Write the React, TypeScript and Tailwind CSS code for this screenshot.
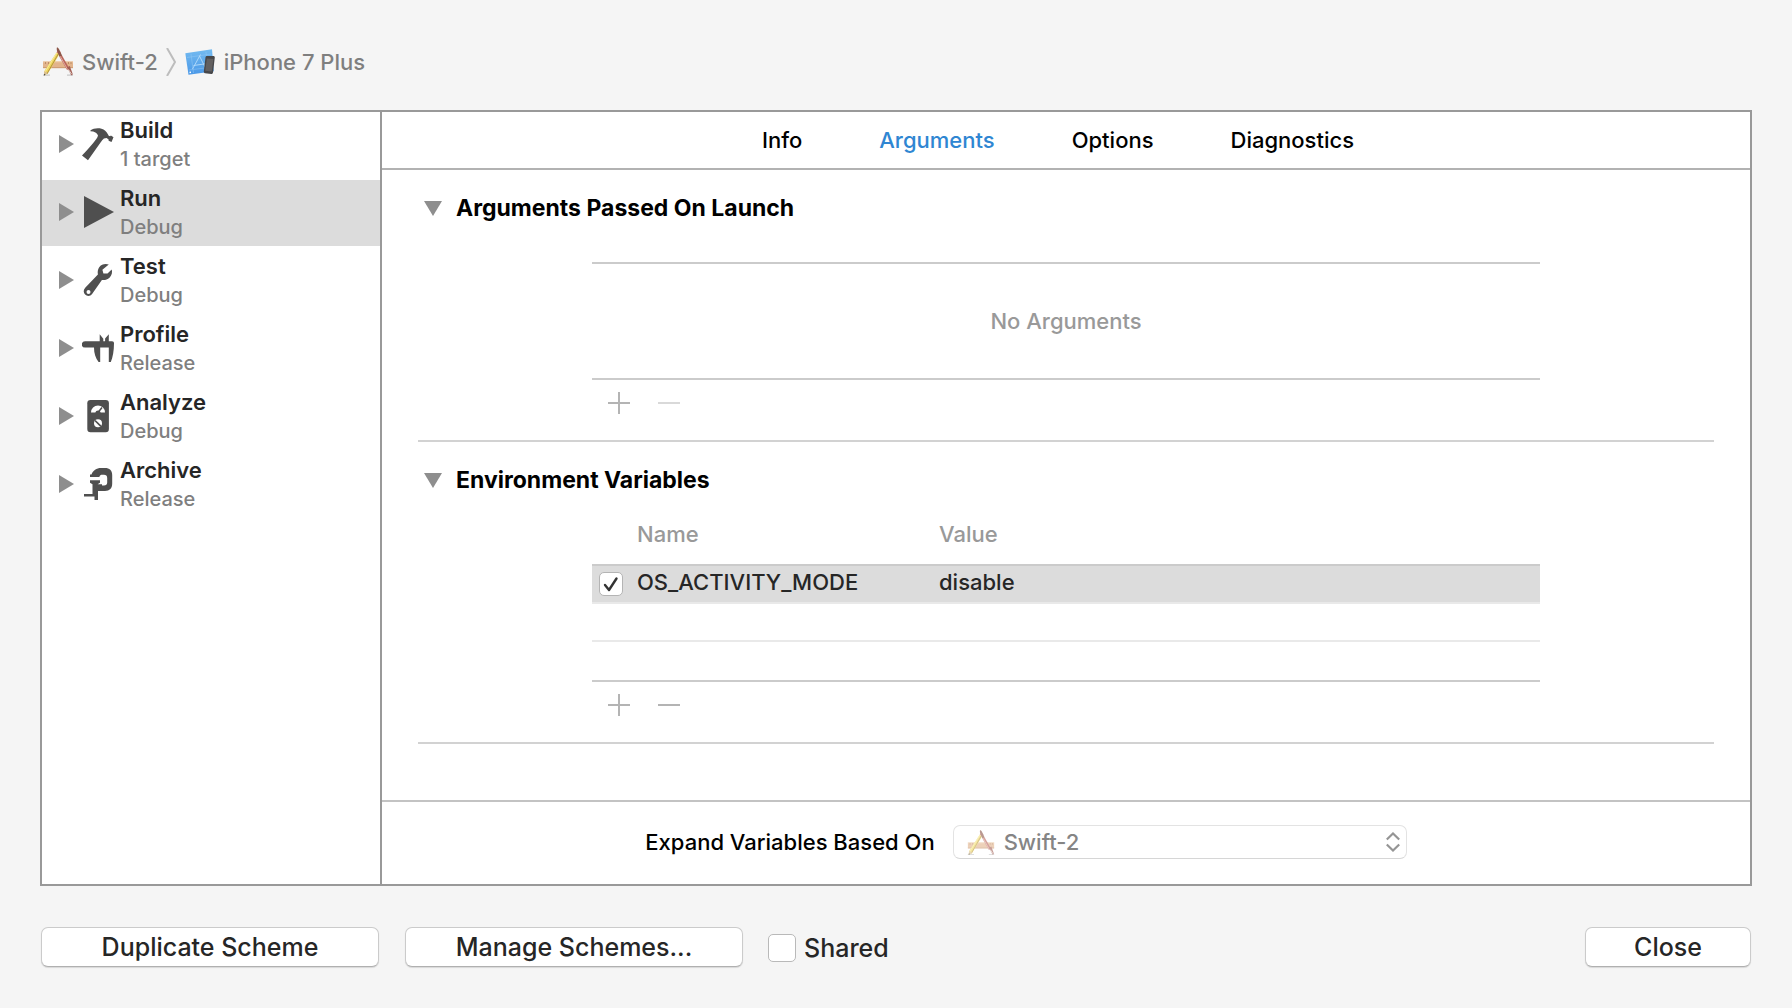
import React, { useState } from "react";

type Action = {
  name: string;
  detail: string;
  icon: React.ReactNode;
};

const HammerIcon = () => (
  <svg viewBox="0 -1 32 32" className="size-8 overflow-visible" fill="#4f4f4f">
    <path d="M8.4 1.4C11-.6 16-1.2 19.5-.2c3 .9 4.8 2.6 6.4 5.4l.8 1.6 1.4.5.8-.8 2.6 1.7-2 4.8-2.9-1.3v-1.3l-2-1.3-2.7.4c-1.4 1.2-2.2 2.3-3 3.6L6 31.2l-6-4.6C5.5 20.6 10.5 15.5 14.3 10c.9-1.3 1.5-2.2 1.7-3.4C15.2 4 12.5 2.3 8.4 2.3z" />
  </svg>
);

const RunIcon = () => (
  <svg viewBox="0 0 32 32" className="size-8" fill="#4f4f4f">
    <path d="M2 0v32l30-16z" />
  </svg>
);

const WrenchIcon = () => (
  <svg viewBox="0 -1 32 32" className="size-8 overflow-visible" fill="#4f4f4f">
    <path
      fillRule="evenodd"
      d="M26.8-.4C23.5-1.7 19.3-.7 17.2 2.3c-1.5 2.2-1.7 4.5-1.3 7.2L3.2 22.7c-2 2.1-1.9 5.1-.1 6.9 2 1.9 5.3 1.7 7-.6l9.8-14c2.9.3 5.5-.3 7.6-2.3 2.3-2.2 3.1-5.6 2.2-8.2l-4.2 4.1-4.1-.2-1-3.6zM6.5 25a2 2 0 1 1 0 4 2 2 0 0 1 0-4z"
    />
  </svg>
);

const CaliperIcon = () => (
  <svg viewBox="0 -1 32 32" className="size-8" fill="#4f4f4f">
    <path d="M3 8.3h14.7V1.3l3.6 4.5v2.5h1.8V5.6l3.7-4.3v7H30c1.4 0 2 .7 2 2C32 18 30.8 24.6 28.8 29h-2V14.6h-8.6V29h-1.6C13.6 25.5 12 20.5 12 14.6H3a3.1 3.1 0 0 1 0-6.3z" />
  </svg>
);

const MeterIcon = () => (
  <svg viewBox="0 -1 32 32" className="size-8 overflow-visible">
    <rect x="5.3" y="-1" width="21.6" height="32.3" rx="3.2" fill="#4f4f4f" />
    <path d="M9 11.5a7 7 0 0 1 14 0h-4.3a2.8 2.8 0 0 0-5.4 0z" fill="#fff" />
    <path d="M16 11.5 20 6.5" stroke="#4f4f4f" strokeWidth="1.5" />
    <circle cx="16" cy="22.3" r="4" fill="#fff" />
    <path d="m13 19.5 6 5.8" stroke="#4f4f4f" strokeWidth="1.7" />
  </svg>
);

const ClampIcon = () => (
  <svg viewBox="0 -1 32 32" className="size-8 overflow-visible" fill="#4f4f4f">
    <path d="M8 5.5h1.5C11 1.5 14.5-1 19-1h4c4.500 0 7.2 2.6 7.2 7v8.5c0 4.7-2.5 7.5-7.2 7.5h-4v-5.5h3c2 0 3.2-1.2 3.2-3V9c0-2-1.2-3.2-3.2-3.2h-1.5c-1.8 0-2.7.6-3.2 2.2H8z" />
    <path d="M8 11.3h10v2.4l-2.4 1.6H20V22h-4v9h-3.5v-3.5H2V25h8.5v-9.7L8 13.7z" />
  </svg>
);

// Pencil and brush crossed over a wooden ruler
const AppIcon = ({ className }: { className?: string }) => (
  <svg viewBox="0 0 32 32" className={className}>
    <path d="M1 29.2h7M25 29.2h6" stroke="#b5b5b5" strokeWidth="1.2" opacity=".7" />
    <rect x="1" y="15.5" width="30" height="6.5" fill="#e2b48c" />
    <path d="M1 15.8h30" stroke="#efcdac" />
    <path d="M1 21.7h30" stroke="#c99870" />
    <path d="M3.5 16v2M6.5 16v2M22.5 16v2M26.5 16v2M29 16v2" stroke="#b5835c" strokeWidth=".8" />
    <path d="m14.5 6.5 3 1.5L5.8 27.4 2 29.5l.4-4.5z" fill="#efd65c" />
    <path d="M16.5 7.6 4.8 28" stroke="#a98a3a" strokeWidth=".9" />
    <path d="M14.7 7 3 26" stroke="#f8eda0" strokeWidth=".9" />
    <path d="m14.5 6.5 1.3-2.2 3 1.7-1.3 2.2z" fill="#dc7a70" />
    <path d="m2.4 25 3.3 2-3.7 2.7z" fill="#d9bd91" />
    <path d="m2.1 27.8 1.4.8L2 29.8z" fill="#444" />
    <path d="M15 1.2c1.3.5 2.1 1.7 2.8 3.5l2.4 5-2.6 1.2-2.3-5.3c-.6-1.6-.8-3-.3-4.4z" fill="#8c5648" />
    <path d="m18.8 10.2 7.5 13.2" stroke="#b9665a" strokeWidth="2.8" />
    <path d="m18.3 10.5 7.3 13" stroke="#e3aaa2" strokeWidth="1" />
    <path d="m25.2 21.3 2.6-1.3 3 8.2-1.5 1.3z" fill="#a35f54" />
    <path d="m26.5 23.6 3 4.5" stroke="#e5d5cf" strokeWidth="1" />
  </svg>
);

const SimulatorIcon = () => (
  <svg viewBox="0 0 32 28" className="h-7 w-8">
    <defs>
      <linearGradient id="sky" x1="0" y1="0" x2="0" y2="1">
        <stop offset="0" stopColor="#74bbf0" />
        <stop offset="1" stopColor="#4a98e8" />
      </linearGradient>
    </defs>
    <path d="M1.3 5.200 28 1.2l1.800 22L4.5 26.800z" fill="url(#sky)" />
    <path d="m3 9.500 24-3.500M5 22l20-2.500M7 6l2.500 19M22 4l2 18" stroke="#93c9f5" strokeWidth=".5" />
    <path d="M16.5 6.500 8.500 21M15.500 8 21 19M9.500 17.500l12-1.700" stroke="#b4dbfa" strokeWidth=".9" fill="none" />
    <path d="m5.500 24.500 1.500-.2" stroke="#fff" strokeWidth="1.500" />
    <path d="M23 8h6.300c1 0 1.600.6 1.500 1.500L29 24.500c-.2 1-.8 1.600-1.700 1.500l-6.300-.8c-.9-.1-1.300-.7-1.200-1.600L21.500 9.300c.2-.9.700-1.300 1.500-1.300z" fill="#47474a" />
    <path d="m22.900 10.500 6.500.5-1.700 12.500-6.500-.7z" fill="#626061" />
  </svg>
);

const Disclosure = ({ open = false }: { open?: boolean }) =>
  open ? (
    <svg viewBox="0 0 18 15" className="h-[15px] w-[18px]" fill="#8e8e8e">
      <path d="M0 0h18L9 15z" />
    </svg>
  ) : (
    <svg viewBox="0 0 15 18" className="h-[18px] w-[15px]" fill="#8e8e8e">
      <path d="M0 0v18l15-9z" />
    </svg>
  );

const actions: Action[] = [
  { name: "Build", detail: "1 target", icon: <HammerIcon /> },
  { name: "Run", detail: "Debug", icon: <RunIcon /> },
  { name: "Test", detail: "Debug", icon: <WrenchIcon /> },
  { name: "Profile", detail: "Release", icon: <CaliperIcon /> },
  { name: "Analyze", detail: "Debug", icon: <MeterIcon /> },
  { name: "Archive", detail: "Release", icon: <ClampIcon /> },
];

const tabs = ["Info", "Arguments", "Options", "Diagnostics"];

const AddRemove = ({ canRemove }: { canRemove: boolean }) => (
  <div className="flex gap-7 pt-3 pb-[26px] pl-4">
    <button type="button" aria-label="Add">
      <svg viewBox="0 0 22 22" className="size-[22px]" stroke="#b4b4b4" strokeWidth="2">
        <path d="M0 11h22M11 0v22" />
      </svg>
    </button>
    <button
      type="button"
      aria-label="Remove"
      disabled={!canRemove}
      className="disabled:opacity-50"
    >
      <svg viewBox="0 0 22 22" className="size-[22px]" stroke="#b4b4b4" strokeWidth="2">
        <path d="M0 11h22" />
      </svg>
    </button>
  </div>
);

const Section = ({ title, children }: { title: string; children: React.ReactNode }) => (
  <section className="border-b-2 border-[#d2d2d2] pt-6">
    <h2 className="text-[23px] leading-7 font-bold text-black">
      <button type="button" className="flex items-center gap-3.5 pl-1.5">
        <Disclosure open />
        {title}
      </button>
    </h2>
    <div className="px-[174px]">{children}</div>
  </section>
);

const PushButton = ({ className, children }: { className: string; children: React.ReactNode }) => (
  <button
    type="button"
    className={`h-10 rounded-[7px] border border-[#cbcbcb] border-b-[#b0b0b0] bg-white text-[25px] leading-8 shadow-[0_1px_1px_rgba(0,0,0,0.12)] ${className}`}
  >
    {children}
  </button>
);

const App = () => {
  const [action, setAction] = useState("Run");
  const [tab, setTab] = useState("Arguments");
  const [enabled, setEnabled] = useState(true);

  return (
    <div className="min-h-screen bg-[#f5f5f5] px-10 pt-[46px] pb-10 font-[Inter,'Liberation_Sans',sans-serif] font-[450] text-[#262626]">
      <nav className="flex h-8 items-center text-[22px] leading-8 text-[#7f7f7f]">
        <AppIcon className="mr-2 ml-0.5 size-8" />
        <span>Swift-2</span>
        <svg viewBox="0 0 10 28" className="mx-2 h-7 w-2.5" fill="none" stroke="#bdbdbd" strokeWidth="2">
          <path d="m1 0 8 14-8 14" />
        </svg>
        <SimulatorIcon />
        <span className="ml-2">iPhone 7 Plus</span>
      </nav>

      <div className="mt-8 flex border-2 border-[#999] bg-white">
        <aside className="flex w-[340px] shrink-0 flex-col gap-0.5 border-r-2 border-[#999]">
          {actions.map((item) => (
            <button
              key={item.name}
              type="button"
              onClick={() => setAction(item.name)}
              className={`flex h-[66px] items-center pb-0.5 pl-[17px] text-left ${
                action === item.name ? "bg-[#dcdcdc]" : ""
              }`}
            >
              <Disclosure />
              <span className="mr-1.5 ml-2">{item.icon}</span>
              <span>
                <span className="block text-[22px] leading-[30px] font-semibold">{item.name}</span>
                <span className="block text-[20px] leading-7 text-[#7f7f7f]">{item.detail}</span>
              </span>
            </button>
          ))}
        </aside>

        <main className="min-w-0 flex-1">
          <div role="tablist" className="flex h-[58px] items-center justify-center gap-[77px] border-b-2 border-[#b2b2b2] pr-4 text-[22px] leading-7 text-black">
            {tabs.map((name) => (
              <button
                key={name}
                type="button"
                role="tab"
                aria-selected={tab === name}
                onClick={() => setTab(name)}
                className={tab === name ? "text-[#2f86d2]" : ""}
              >
                {name}
              </button>
            ))}
          </div>

          <div className="px-9 pb-14">
            <Section title="Arguments Passed On Launch">
              <div className="mt-10 flex h-[118px] items-center justify-center border-y-2 border-[#cbcbcb] text-[22px] leading-7 text-[#999]">
                No Arguments
              </div>
              <AddRemove canRemove={false} />
            </Section>

            <Section title="Environment Variables">
              <table className="mt-2.5 w-full table-fixed border-separate border-spacing-0 text-[22px] leading-7">
                <thead>
                  <tr className="h-[60px] text-left text-[#999]">
                    <th className="w-[45px] p-0" aria-label="Enabled" />
                    <th className="w-[302px] p-0 font-[450]">Name</th>
                    <th className="p-0 font-[450]">Value</th>
                  </tr>
                </thead>
                <tbody>
                  <tr className="h-10 bg-[#dcdcdc] *:border-t-2 *:border-b-2 *:border-t-[#cbcbcb] *:border-b-[#e9e9e9]">
                    <td className="p-0 pl-[7px]">
                      <label className="relative block size-6">
                        <input
                          type="checkbox"
                          aria-label="Enable OS_ACTIVITY_MODE"
                          checked={enabled}
                          onChange={(e) => setEnabled(e.target.checked)}
                          className="block size-6 appearance-none rounded-[5px] border border-[#b4b4b4] bg-white"
                        />
                        {enabled && (
                          <svg viewBox="0 0 24 24" className="pointer-events-none absolute inset-0 size-6" fill="none" stroke="#333" strokeWidth="2.4" strokeLinecap="round" strokeLinejoin="round">
                            <path d="m6 13 4 5 7.5-11.5" />
                          </svg>
                        )}
                      </label>
                    </td>
                    <td className="p-0 pb-1">OS_ACTIVITY_MODE</td>
                    <td className="p-0 pb-1">disable</td>
                  </tr>
                  <tr className="h-[38px]">
                    <td colSpan={3} className="border-b-2 border-[#e9e9e9] p-0" />
                  </tr>
                  <tr className="h-10">
                    <td colSpan={3} className="border-b-2 border-[#cbcbcb] p-0" />
                  </tr>
                </tbody>
              </table>
              <AddRemove canRemove />
            </Section>
          </div>

          <div className="flex items-center justify-center gap-[18px] border-t-2 border-[#c3c3c3] pt-[23px] pr-20 pb-[25px] text-[22px] leading-7">
            <label htmlFor="expand" className="text-black">
              Expand Variables Based On
            </label>
            <div className="relative">
              <select
                id="expand"
                disabled
                className="block h-[34px] w-[454px] appearance-none rounded-[7px] border border-[#e3e3e3] border-b-[#d6d6d6] bg-white pl-[50px] text-[#858585] opacity-100"
              >
                <option>Swift-2</option>
              </select>
              <AppIcon className="pointer-events-none absolute top-1 left-3.5 size-7 opacity-60" />
              <svg viewBox="0 0 14 20" className="pointer-events-none absolute top-[7px] right-[7px] h-5 w-3.5" fill="none" stroke="#959595" strokeWidth="2.2">
                <path d="m.8 7.5 6.2-6 6.2 6M.8 12.5l6.2 6 6.2-6" />
              </svg>
            </div>
          </div>
        </main>
      </div>

      <footer className="mt-[41px] flex items-center px-px">
        <PushButton className="w-[338px]">Duplicate Scheme</PushButton>
        <PushButton className="ml-[26px] w-[338px]">Manage Schemes...</PushButton>
        <label className="mt-0.5 ml-[25px] flex items-center gap-2 text-[25px] leading-8">
          <input
            type="checkbox"
            className="size-7 appearance-none rounded-[5px] border border-[#b9b9b9] bg-white"
          />
          Shared
        </label>
        <PushButton className="ml-auto w-[166px]">Close</PushButton>
      </footer>
    </div>
  );
};

export default App;
